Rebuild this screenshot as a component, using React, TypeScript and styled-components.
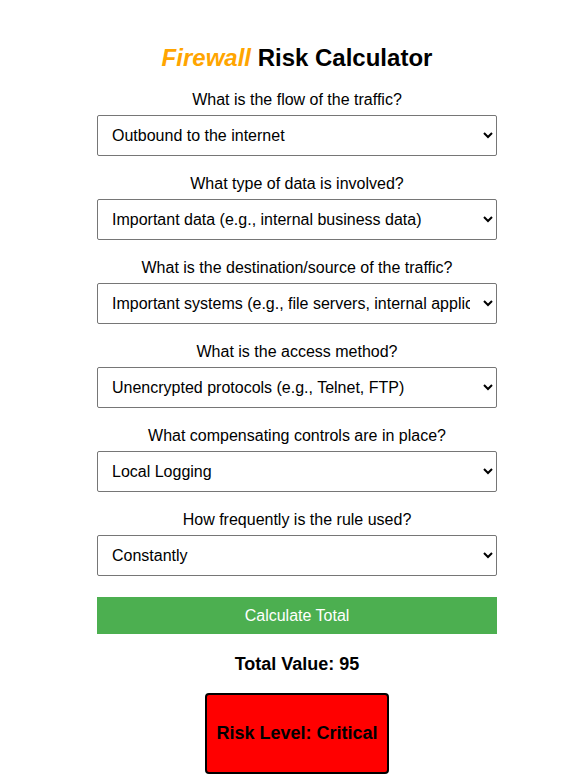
import React from "react";
import styled, { createGlobalStyle } from "styled-components";

const Global = createGlobalStyle`
  body { margin: 0; padding-left: 6px; font-family: "Liberation Sans", Arial, sans-serif; background: #fff; color: #000; }
`;

const Container = styled.div`
  width: 400px;
  margin: 0 auto;
  padding-top: 44px;
  display: flex;
  flex-direction: column;
  align-items: center;
`;

const Title = styled.h1`
  margin: 0 0 19px;
  font-size: 24px;
  line-height: 28px;
  font-weight: bold;
`;

const Accent = styled.span`
  color: #ffa500;
  font-style: italic;
`;

const Field = styled.div`
  width: 100%;
  display: flex;
  flex-direction: column;
  align-items: center;
  margin-bottom: 19px;
`;

const Label = styled.label`
  font-size: 16px;
  line-height: 18px;
  margin-bottom: 6px;
`;

const Select = styled.select`
  width: 100%;
  height: 41px;
  padding: 0 10px;
  font-family: "Liberation Sans", Arial, sans-serif;
  font-size: 16px;
  color: #000;
  background: #fff;
  border: 1px solid #767676;
  border-radius: 2px;
`;

const Button = styled.button`
  width: 100%;
  height: 37px;
  margin-top: 2px;
  border: none;
  background: #4caf50;
  color: #fff;
  font-family: "Liberation Sans", Arial, sans-serif;
  font-size: 16px;
`;

const Total = styled.div`
  margin-top: 20px;
  font-size: 18px;
  line-height: 21px;
  font-weight: bold;
`;

const Risk = styled.div<{ $bg: string }>`
  margin-top: 18px;
  width: 184px;
  height: 81px;
  box-sizing: border-box;
  border: 2px solid #000;
  border-radius: 4px;
  background: ${(p) => p.$bg};
  display: flex;
  align-items: center;
  justify-content: center;
  font-size: 18px;
  font-weight: bold;
`;

const questions: [string, string][] = [
  ["What is the flow of the traffic?", "Outbound to the internet"],
  ["What type of data is involved?", "Important data (e.g., internal business data)"],
  ["What is the destination/source of the traffic?", "Important systems (e.g., file servers, internal applications)"],
  ["What is the access method?", "Unencrypted protocols (e.g., Telnet, FTP)"],
  ["What compensating controls are in place?", "Local Logging"],
  ["How frequently is the rule used?", "Constantly"],
];

export default function App() {
  return (
    <>
      <Global />
      <Container>
        <Title>
          <Accent>Firewall</Accent> Risk Calculator
        </Title>
        {questions.map(([q, a], i) => (
          <Field key={i}>
            <Label>{q}</Label>
            <Select defaultValue={a}>
              <option>{a}</option>
            </Select>
          </Field>
        ))}
        <Button>Calculate Total</Button>
        <Total>Total Value: 95</Total>
        <Risk $bg="#ff0000">Risk Level: Critical</Risk>
      </Container>
    </>
  );
}
